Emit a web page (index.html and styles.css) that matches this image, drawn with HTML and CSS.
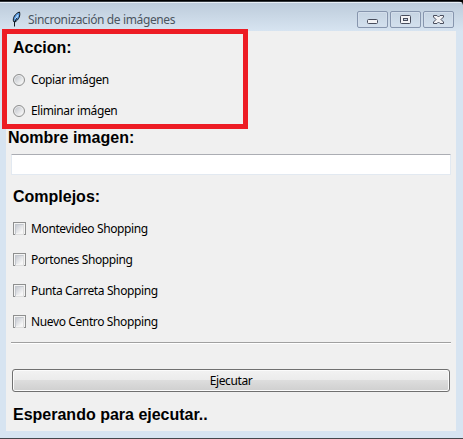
FILE: index.html
```
<!DOCTYPE html>
<html lang="es">
<head>
<meta charset="utf-8">
<title>Sincronización de imágenes</title>
<link rel="stylesheet" href="styles.css">
</head>
<body>
<div class="window">
  <header class="titlebar">
    <svg class="feather" width="12" height="17" viewBox="0 0 12 17">
      <path d="M2.500 10.500C1.500 7 4 2.500 8.500 1c1 3.500-.5 7.500-4.500 10z" fill="#5b9be0" stroke="#101820"/>
      <path d="M4.500 8l2.500-4" stroke="#b9dcfa" stroke-width="1.200"/>
      <path d="M3.500 15.500V11L6 7" fill="none" stroke="#101820"/>
    </svg>
    <span class="title">Sincronización de imágenes</span>
    <div class="controls">
      <span class="control"><svg width="29" height="15"><rect x="9.500" y="7.500" width="10" height="4" rx="1" fill="#f3f3f5" stroke="#484d5c"/></svg></span>
      <span class="control"><svg width="29" height="15"><rect x="9.500" y="3.500" width="10" height="8" rx="1" fill="#f3f3f5" stroke="#484d5c"/><rect x="12.500" y="6.500" width="4" height="2" fill="#c2d0df" stroke="#484d5c"/></svg></span>
      <span class="control"><svg width="29" height="15"><path d="M9.500 3.500h3.500l1.500 1.500 1.500-1.500h3.500v1.500l-2.500 2.500 2.500 2.500v1.500h-3.500l-1.500-1.500-1.500 1.500H9.500V10l2.500-2.500L9.500 5z" fill="#f3f3f5" stroke="#484d5c"/></svg></span>
    </div>
  </header>
  <main class="content">
    <h2 class="heading">Accion:</h2>
    <label class="option"><i class="radio"></i><span>Copiar imágen</span></label>
    <label class="option"><i class="radio"></i><span>Eliminar imágen</span></label>
    <h2 class="heading name">Nombre imagen:</h2>
    <input class="field" type="text" aria-label="Nombre imagen">
    <h2 class="heading">Complejos:</h2>
    <label class="option"><i class="check"></i><span>Montevideo Shopping</span></label>
    <label class="option"><i class="check"></i><span>Portones Shopping</span></label>
    <label class="option"><i class="check"></i><span>Punta Carreta Shopping</span></label>
    <label class="option"><i class="check"></i><span>Nuevo Centro Shopping</span></label>
    <div class="separator"></div>
    <button class="run">Ejecutar</button>
    <h2 class="heading status">Esperando para ejecutar..</h2>
  </main>
  <div class="highlight"></div>
</div>
</body>
</html>
```
FILE: styles.css
```
* { box-sizing: border-box; }
body { margin: 0; background: #000; overflow: hidden; font: 12px "Noto Sans", sans-serif; color: #000; }
.window {
  position: relative;
  width: 463px;
  height: 438px;
  padding: 0 7px 7px 6px;
  border-top: 1px solid #000;
  border-radius: 0 5px 0 0;
  background: linear-gradient(#33383d 0 1px, #e8eff6 1px 2px, #bdccdb 2px, #d7e4f1 30px);
}
body::after { content: ""; display: block; height: 1px; background: #44464b; }
.titlebar { display: flex; height: 30px; padding-left: 5px; }
.feather { margin: 10px 5px 0 0; }
.title { margin-top: 10px; line-height: 17px; color: #4b555f; letter-spacing: -0.37px; white-space: nowrap; }
.controls { display: flex; gap: 2px; margin: 10px 2px 0 auto; }
.control {
  width: 31px;
  height: 17px;
  border: 1px solid #8796ae;
  border-radius: 2px;
  box-shadow: inset 0 0 0 1px #d3deeb;
}
.control svg { display: block; }
.content { display: flex; flex-direction: column; width: 450px; height: 400px; padding: 0 5px; background: #f0f0f0; }
.heading { margin: 0; padding-left: 2px; font: bold 16px/33px "Liberation Sans", sans-serif; white-space: nowrap; }
.name { margin-left: -5px; line-height: 23px; }
.option { display: flex; align-items: center; height: 31px; padding-left: 2px; letter-spacing: -0.38px; white-space: nowrap; }
.option span { line-height: 17px; }
.radio, .check { flex: none; width: 13px; height: 13px; margin-right: 5px; border: 1px solid #8e8f8f; }
.radio { width: 12px; height: 12px; margin-top: 1px; margin-right: 6px; border-radius: 50%; background: linear-gradient(135deg, #b8bdc5, #f5f5f5 80%); box-shadow: inset 0 0 0 1px #eee; }
.check { padding: 1px; background: linear-gradient(135deg, #bfc3cc, #f6f6f6 80%) content-box, #f4f4f4; }
.check::before { content: ""; display: block; height: 9px; border: 1px solid #c4c8ce; border-right-color: #dedede; border-bottom-color: #dedede; }
.field { width: 440px; height: 21px; margin: 5px 0; border: 1px solid #e2e9f1; border-top-color: #abadb3; border-radius: 1px; background: #fff; outline: 0; }
.separator { height: 2px; margin-top: 5px; background: linear-gradient(#a0a0a0 50%, #fff 50%); }
.run {
  height: 23px;
  margin: 25px 1px 0;
  padding: 0;
  border: 1px solid #707070;
  border-radius: 3px;
  background: linear-gradient(#f2f2f2, #ebebeb 48%, #dddddd 50%, #cfcfcf);
  box-shadow: inset 0 0 0 1px #fbfbfb;
  font: 12px/19px "Noto Sans", sans-serif;
  letter-spacing: -0.38px;
  color: #000;
}
.status { line-height: 46px; height: 39px; }
.highlight { position: absolute; left: 2px; top: 28px; width: 246px; height: 100px; border: 5px solid #ed1c24; }
```
